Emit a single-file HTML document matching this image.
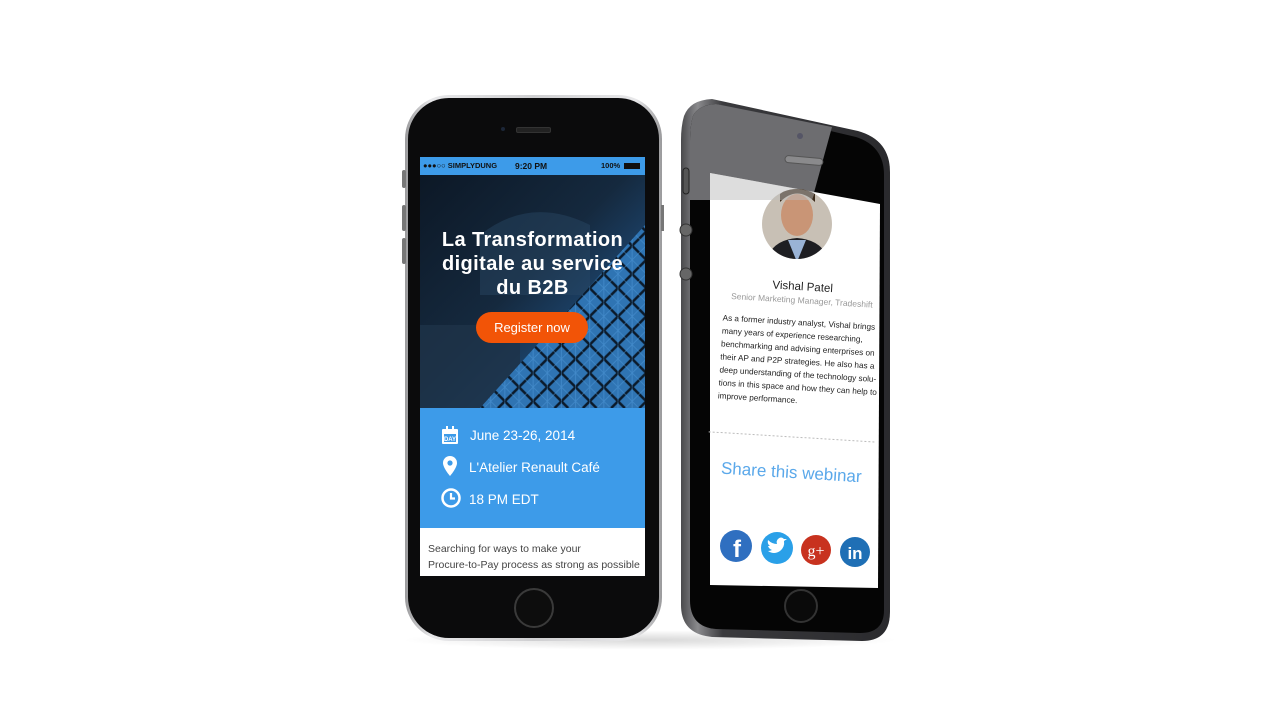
<!DOCTYPE html>
<html><head><style>
body{margin:0;width:1280px;height:720px;background:#fff;position:relative;overflow:hidden;font-family:"Liberation Sans",sans-serif}
.abs{position:absolute}
</style></head><body>
<div class="abs" style="left:400px;top:630px;width:500px;height:20px;border-radius:50%;background:radial-gradient(ellipse,rgba(0,0,0,.15),rgba(0,0,0,0) 70%)"></div>

<!-- LEFT PHONE -->
<div class="abs" style="left:405px;top:95px;width:257px;height:546px;border-radius:44px;background:linear-gradient(90deg,#9a9a9c,#e8e8ea 10%,#cfcfd1 50%,#e8e8ea 90%,#9a9a9c);"></div>
<div class="abs" style="left:408px;top:98px;width:251px;height:540px;border-radius:41px;background:#0b0b0c;"></div>
<div class="abs" style="left:402px;top:170px;width:4px;height:18px;background:#777;border-radius:2px"></div>
<div class="abs" style="left:402px;top:205px;width:4px;height:26px;background:#777;border-radius:2px"></div>
<div class="abs" style="left:402px;top:238px;width:4px;height:26px;background:#777;border-radius:2px"></div>
<div class="abs" style="left:661px;top:205px;width:3px;height:26px;background:#777"></div>
<div class="abs" style="left:501px;top:127px;width:4px;height:4px;border-radius:50%;background:#1c2638"></div>
<div class="abs" style="left:516px;top:127px;width:33px;height:4px;border-radius:2px;background:#222;border:1px solid #333"></div>
<div class="abs" style="left:514px;top:588px;width:36px;height:36px;border-radius:50%;border:2px solid #3a3a3a;background:#0d0d0d"></div>

<div class="abs" style="left:420px;top:157px;width:225px;height:419px;overflow:hidden;background:#fff">
  <div class="abs" style="left:0;top:0;width:225px;height:18px;background:#3d9be9;font-size:7.5px;font-weight:bold;color:#111;line-height:18px">
    <span class="abs" style="left:3px">●●●○○ SIMPLYDUNG</span>
    <span class="abs" style="left:95px;font-size:8.5px">9:20 PM</span>
    <span class="abs" style="left:181px">100%</span>
    <span class="abs" style="left:204px;top:6px;width:16px;height:6px;background:#111"></span>
  </div>
  <div class="abs" style="left:0;top:18px;width:225px;height:233px;background:linear-gradient(135deg,#0c1826 0%,#15293e 45%,#1d4670 70%,#2a6aa6 100%)">
    <svg class="abs" style="left:0;top:0" width="225" height="233">
      <defs><pattern id="p" width="20" height="20" patternUnits="userSpaceOnUse" patternTransform="rotate(45)"><rect width="20" height="20" fill="none" stroke="#0b1a2a" stroke-width="2.5"/><path d="M0 10H20M10 0V20M0 0L20 20" stroke="#4d97d8" stroke-width=".8" opacity=".6"/></pattern></defs>
      <rect x="0" y="150" width="100" height="83" fill="#1e3348" opacity=".8"/>
      <path d="M60 60 Q110 20 170 50 L170 120 L60 120Z" fill="#2a4a66" opacity=".45"/>
      <polygon points="60,233 225,50 225,233" fill="#2f74b3"/>
      <polygon points="60,233 225,50 225,233" fill="url(#p)"/>
    </svg>
    <div class="abs" style="left:0;top:53px;width:225px;text-align:center;color:#fff;font-weight:bold;font-size:20px;letter-spacing:.4px;line-height:24px">La Transformation<br>digitale au service<br>du B2B</div>
    <div class="abs" style="left:56px;top:137px;width:112px;height:31px;border-radius:16px;background:#f25407;color:#fff;font-size:13px;text-align:center;line-height:31px">Register now</div>
  </div>
  <div class="abs" style="left:0;top:251px;width:225px;height:120px;background:#3d9be9;color:#fff;font-size:13.5px">
    <svg class="abs" style="left:21px;top:18px" width="18" height="19"><rect x="1" y="3" width="16" height="15" fill="#fff" rx="1"/><rect x="5" y="0" width="2" height="5" fill="#fff"/><rect x="11" y="0" width="2" height="5" fill="#fff"/><rect x="3" y="8" width="12" height="8" fill="#3d9be9"/><text x="9" y="15" font-size="6" fill="#fff" text-anchor="middle" font-family="Liberation Sans" font-weight="bold">DAY</text></svg>
    <span class="abs" style="left:50px;top:20px">June 23-26, 2014</span>
    <svg class="abs" style="left:23px;top:48px" width="14" height="20"><path d="M7 0a7 7 0 0 1 7 7c0 5-7 13-7 13S0 12 0 7a7 7 0 0 1 7-7z" fill="#fff"/><circle cx="7" cy="7" r="2.6" fill="#3d9be9"/></svg>
    <span class="abs" style="left:49px;top:52px">L'Atelier Renault Café</span>
    <svg class="abs" style="left:21px;top:80px" width="20" height="20"><circle cx="10" cy="10" r="8.5" fill="none" stroke="#fff" stroke-width="2.5"/><path d="M10 5V10.5H14" stroke="#fff" stroke-width="2.2" fill="none"/></svg>
    <span class="abs" style="left:49px;top:84px">18 PM EDT</span>
  </div>
  <div class="abs" style="left:8px;top:384px;font-size:10.5px;color:#444;line-height:16px">Searching for ways to make your<br>Procure-to-Pay process as strong as possible</div>
</div>

<!-- RIGHT PHONE -->
<svg class="abs" style="left:0;top:0" width="1280" height="720">
  <defs><linearGradient id="rim" x1="0" x2="1"><stop offset="0" stop-color="#4a4a4d"/><stop offset=".08" stop-color="#8a8a8d"/><stop offset=".2" stop-color="#3a3a3d"/><stop offset="1" stop-color="#2a2a2d"/></linearGradient></defs>
  <path d="M712 99 Q690 100 684 116 Q681 126 681 140 L681 605 Q681 634 712 637 L862 641 Q890 641 890 612 L890 172 Q890 140 858 131 Z" fill="url(#rim)"/>
  <path d="M716 104 Q698 105 693 116 Q690 126 690 142 L690 600 Q690 627 716 629 L860 633 Q884 633 884 610 L884 175 Q884 146 856 137 Z" fill="#050505"/>
  <path d="M716 104 Q698 105 693 116 Q690 126 690 142 L690 200 L812 200 L832 127 Z" fill="#6d6d70"/>
  <rect x="683" y="168" width="6" height="26" rx="3" fill="#555" stroke="#222"/>
  <circle cx="686" cy="230" r="6" fill="#666" stroke="#333"/>
  <circle cx="686" cy="274" r="6" fill="#666" stroke="#333"/>
  <circle cx="800" cy="136" r="3" fill="#556"/>
  <rect x="785" y="157" width="38" height="7" rx="3.5" fill="#8a8a8c" stroke="#555" transform="rotate(5 804 160)"/>
  <polygon points="710,173 880,204 878,588 710,585" fill="#fff"/>
  <circle cx="801" cy="606" r="16" fill="#0a0a0a" stroke="#333" stroke-width="2"/>
  <defs><clipPath id="c"><circle cx="797" cy="224" r="35"/></clipPath></defs>
  <g clip-path="url(#c)">
    <rect x="760" y="185" width="75" height="80" fill="#c8c0b5"/>
    <ellipse cx="797" cy="215" rx="16" ry="21" fill="#c99576"/>
    <path d="M780 202 Q797 185 815 202 L815 194 Q797 180 780 194Z" fill="#3a2a1a"/>
    <path d="M765 265 Q770 240 797 238 Q825 240 830 265Z" fill="#1e1e22"/>
    <path d="M788 240 L797 262 L806 240Z" fill="#9ab3d6"/>
  </g>
  <polygon points="710,173 815,192 812,200 710,200" fill="#bbb" opacity=".5"/>
  <g transform="rotate(3.5 795 380)" font-family="Liberation Sans">
    <text x="797" y="290" font-size="11.5" fill="#222" text-anchor="middle">Vishal Patel</text>
    <text x="797" y="303" font-size="8.5" fill="#999" text-anchor="middle">Senior Marketing Manager, Tradeshift</text>
    <g font-size="8.2" fill="#222">
      <text x="719" y="325">As a former industry analyst, Vishal brings</text>
      <text x="719" y="338">many years of experience researching,</text>
      <text x="719" y="351">benchmarking and advising enterprises on</text>
      <text x="719" y="364">their AP and P2P strategies. He also has a</text>
      <text x="719" y="377">deep understanding of the technology solu-</text>
      <text x="719" y="390">tions in this space and how they can help to</text>
      <text x="719" y="403">improve performance.</text>
    </g>
    <line x1="712" y1="437" x2="880" y2="437" stroke="#bbb" stroke-dasharray="2 2"/>
    <text x="797" y="478" font-size="17" fill="#5aa8ea" text-anchor="middle">Share this webinar</text>
  </g>
  <circle cx="736" cy="546" r="16" fill="#2f6fc0"/><text x="737" y="557" font-size="24" font-weight="bold" fill="#fff" text-anchor="middle" font-family="Liberation Sans">f</text>
  <circle cx="777" cy="548" r="16" fill="#2aa0e8"/><path d="M768 551 q6 4 12 0 q5 -4 4 -10 l3 -2 -3 0 q-3 -3 -6 0 q-2 2 -1 5 q-5 0 -9 -4 q-1 4 2 6 l-2 0 q1 3 4 4 q-2 1 -4 1Z" fill="#fff"/>
  <circle cx="816" cy="550" r="15" fill="#c8321f"/><text x="816" y="556" font-size="16" fill="#fff" text-anchor="middle" font-family="Liberation Serif">g+</text>
  <circle cx="855" cy="552" r="15" fill="#1f6fb5"/><text x="855" y="559" font-size="17" font-weight="bold" fill="#fff" text-anchor="middle" font-family="Liberation Sans">in</text>
</svg>
</body></html>
